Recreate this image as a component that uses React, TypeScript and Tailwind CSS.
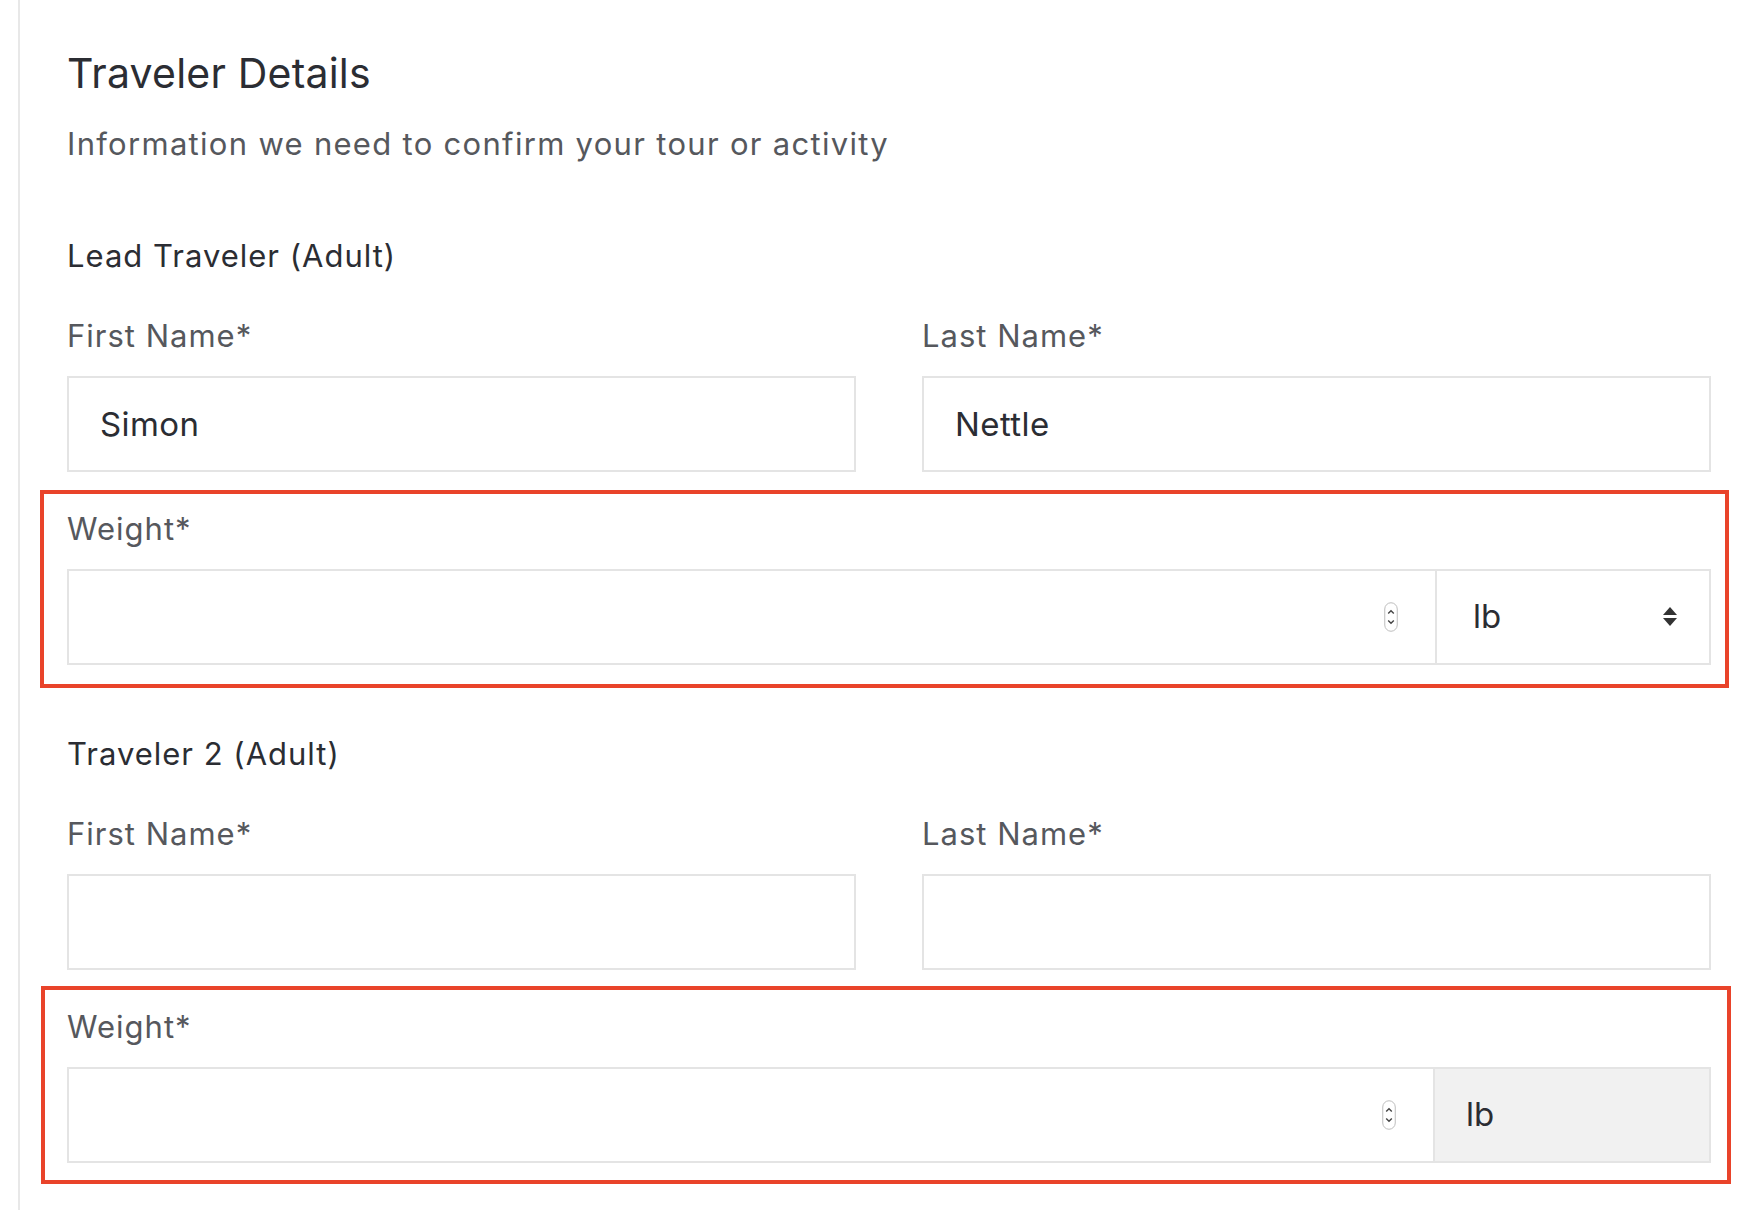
import { useState } from 'react';

type Traveler = { heading: string; first: string; last: string; unitLocked: boolean; box: string };

const TRAVELERS: Traveler[] = [
  {
    heading: 'Lead Traveler (Adult)',
    first: 'Simon',
    last: 'Nettle',
    unitLocked: false,
    box: '-top-[19px] -bottom-[23px] -left-[27px] -right-[18px]',
  },
  {
    heading: 'Traveler 2 (Adult)',
    first: '',
    last: '',
    unitLocked: true,
    box: '-top-[21px] -bottom-[21px] -left-[26px] -right-[20px]',
  },
];

export default function App() {
  return (
    <div className="min-h-screen bg-white font-['Inter',sans-serif]">
      <div className="ml-[18px] min-h-screen border-l-2 border-[#e8e8e8] pl-[47px] pr-[35px] pt-[49px] pb-20">
        <h1 className="text-[41px] leading-[48px] font-normal tracking-[0.2px] text-[#2b2d33]">Traveler Details</h1>
        <p className="mt-[27px] text-[31px] leading-[40px] tracking-[1.3px] text-[#56585d]">
          Information we need to confirm your tour or activity
        </p>

        <div className="mt-[72px] space-y-[69px]">
          {TRAVELERS.map((t) => (
            <TravelerBlock key={t.heading} traveler={t} />
          ))}
        </div>
      </div>
    </div>
  );
}

function TravelerBlock({ traveler }: { traveler: Traveler }) {
  return (
    <section>
      <h3 className="text-[31px] leading-[40px] tracking-[1px] text-[#2b2d33]">{traveler.heading}</h3>
      <div className="mt-10 grid grid-cols-2 gap-x-[66px]">
        <TextField label="First Name*" initial={traveler.first} />
        <TextField label="Last Name*" initial={traveler.last} />
      </div>
      <WeightField locked={traveler.unitLocked} box={traveler.box} />
    </section>
  );
}

function TextField(props: { label: string; initial: string }) {
  const [value, setValue] = useState(props.initial);
  return (
    <label className="block">
      <span className="block text-[31px] leading-[40px] tracking-[1px] text-[#56585d]">{props.label}</span>
      <input
        value={value}
        onChange={(e) => setValue(e.target.value)}
        className="mt-5 block h-[96px] w-full border-2 border-[#e4e4e4] bg-white px-[31px] text-[33px] tracking-[0.4px] text-[#2b2d33] outline-none"
      />
    </label>
  );
}

function WeightField(props: { locked: boolean; box: string }) {
  return (
    <div className="relative mt-[37px]">
      <div className="text-[31px] leading-[40px] tracking-[1px] text-[#56585d]">Weight*</div>
      <div className="mt-5 flex h-[96px] border-2 border-[#e4e4e4] bg-white">
        <div className="flex flex-1 items-center justify-end pr-[37px]">
          <Spinner />
        </div>
        {props.locked ? (
          <div className="flex w-[276px] items-center border-l-2 border-[#e4e4e4] bg-[#f1f1f1] pl-[31px] text-[33px] text-[#2b2d33]">
            lb
          </div>
        ) : (
          <div className="flex w-[274px] items-center justify-between border-l-2 border-[#e4e4e4] pl-[36px] pr-[32px] text-[33px] text-[#2b2d33]">
            <span>lb</span>
            <svg width="14" height="20" viewBox="0 0 14 20" aria-hidden="true">
              <path d="M0 8 L7 0 L14 8 Z" fill="#333" />
              <path d="M0 11 L14 11 L7 19 Z" fill="#333" />
            </svg>
          </div>
        )}
      </div>
      <div className={`pointer-events-none absolute border-4 border-[#e9432a] ${props.box}`} />
    </div>
  );
}

function Spinner() {
  return (
    <svg width="14" height="30" viewBox="0 0 14 30" aria-hidden="true">
      <rect x="0.75" y="0.75" width="12.5" height="28.5" rx="6.25" fill="#fff" stroke="#bdbdbd" strokeWidth="1" />
      <path d="M4.2 11.5 L7 8.7 L9.8 11.5" fill="none" stroke="#444" strokeWidth="1.4" />
      <path d="M4.2 18.5 L7 21.3 L9.8 18.5" fill="none" stroke="#444" strokeWidth="1.4" />
    </svg>
  );
}
